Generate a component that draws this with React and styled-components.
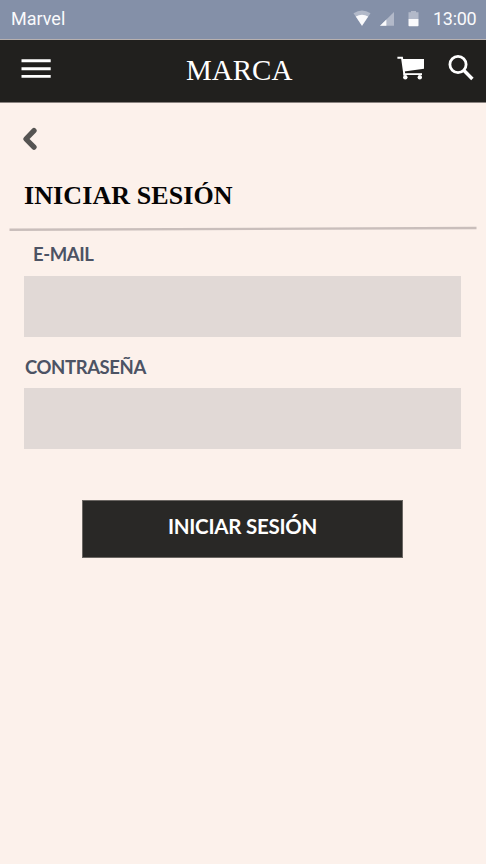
import React from "react";
import styled, { createGlobalStyle } from "styled-components";

const GlobalStyle = createGlobalStyle`
  * { box-sizing: border-box; }
  body { margin: 0; background: #fcf1eb; }
`;

const Screen = styled.div`
  width: 486px;
  height: 864px;
  overflow: hidden;
  display: flex;
  flex-direction: column;
  background: #fcf1eb;
  font-family: Lato, sans-serif;
`;

const StatusBar = styled.div`
  height: 39px;
  flex: none;
  display: flex;
  align-items: center;
  padding: 0 9px 2px 11px;
  background: #8490a8;
  color: #fafafc;
  font: 400 18px/24px Roboto, sans-serif;
`;

const StatusIcons = styled.svg`
  width: 70px;
  height: 20px;
  margin-left: auto;
  margin-right: 10px;
`;

const Clock = styled.span`
  width: 44px;
  letter-spacing: -0.3px;
  white-space: nowrap;
`;

const Header = styled.header`
  height: 64px;
  flex: none;
  display: grid;
  grid-template-columns: 186px 1fr 96px;
  background: #21201e;
  border-top: 1px solid #b7b0af;
  border-bottom: 1px solid #8a8380;
`;

const IconButton = styled.button`
  display: block;
  padding: 0;
  border: 0;
  background: none;
  svg { display: block; }
`;

const MenuButton = styled(IconButton)`
  margin: 19px 0 0 21px;
  width: 30px;
  height: 20px;
`;

const Brand = styled.div`
  padding-top: 13px;
  color: #fff;
  font: 400 29px/34px "Liberation Serif", serif;
  white-space: nowrap;
`;

const Actions = styled.div`
  display: flex;
  align-items: flex-start;
  gap: 20px;
  padding: 14px 0 0 6px;
`;

const Content = styled.main`
  display: flex;
  flex-direction: column;
  align-items: flex-start;
`;

const BackButton = styled(IconButton)`
  margin: 23px 0 0 21px;
  width: 18px;
  height: 26px;
`;

const Title = styled.h1`
  margin: 28px 0 0 24px;
  color: #050404;
  font: 700 26px/32px "Liberation Serif", serif;
  letter-spacing: 0.1px;
  white-space: nowrap;
`;

const Rule = styled.svg`
  display: block;
  width: 486px;
  height: 8px;
  margin-top: 13px;
`;

const Form = styled.form`
  display: flex;
  flex-direction: column;
  width: 437px;
  margin-left: 24px;
`;

const Label = styled.label`
  margin-top: ${(p) => p.$top}px;
  padding-left: ${(p) => p.$indent}px;
  color: #4c5364;
  font-size: 18.5px;
  font-weight: 700;
  line-height: 24px;
  letter-spacing: -0.4px;
  white-space: nowrap;
`;

const Input = styled.input`
  width: 437px;
  height: 61px;
  margin-top: ${(p) => p.$top}px;
  padding: 0 14px;
  border: 0;
  border-radius: 0;
  outline: 0;
  background: #e1d9d6;
  color: #4c5364;
  font: 400 18px Lato, sans-serif;
`;

const Submit = styled.button`
  width: 321px;
  height: 58px;
  margin: 51px 0 0 58px;
  padding: 0 0 6px;
  border: 1px solid #6b6763;
  background: #292826;
  color: #fff;
  font: 700 20.5px/24px Lato, sans-serif;
  letter-spacing: -0.25px;
  white-space: nowrap;
`;

export default function App() {
  return (
    <Screen>
      <GlobalStyle />
      <StatusBar>
        <span>Marvel</span>
        <StatusIcons viewBox="0 0 70 20" aria-hidden="true">
          <path d="M0.5 4.2Q9 -1.2 17.5 4.2L9 17Z" fill="#b2b9c9" />
          <path d="M2.8 7.6Q9 3.7 15.2 7.6L9 16.7Z" fill="#fafafc" />
          <path d="M27 16.7L41 3V16.7Z" fill="#b2b9c9" />
          <path d="M27 16.7L33.4 10.4V16.7Z" fill="#fafafc" />
          <path d="M58 2h5v1.3h2.5V10h-10V3.3H58Z" fill="#b2b9c9" />
          <path d="M55.5 10h10v6.5q0 .8-.8.8h-8.4q-.8 0-.8-.8Z" fill="#fafafc" />
        </StatusIcons>
        <Clock>13:00</Clock>
      </StatusBar>
      <Header>
        <MenuButton aria-label="Menú">
          <svg width="30" height="20" viewBox="0 0 30 20" fill="#fff">
            <path d="M.5 .2h29.2v3H.5ZM.5 8.2h29.2v3H.5ZM.5 16h29.2v2.8H.5Z" />
          </svg>
        </MenuButton>
        <Brand>MARCA</Brand>
        <Actions>
          <IconButton aria-label="Carrito">
            <svg width="31" height="28" viewBox="0 0 31 28">
              <path d="M1.4 3.8H6L8.5 21.5" fill="none" stroke="#fff" strokeWidth="1.9" />
              <path d="M6.2 5H28V14.8L8.2 17.6Z" fill="#fff" />
              <path d="M7.5 19.2H26V21H7.5Z" fill="#fff" />
              <circle cx="9.3" cy="23.2" r="2.2" fill="#fff" />
              <circle cx="23.8" cy="23.2" r="2.2" fill="#fff" />
            </svg>
          </IconButton>
          <IconButton aria-label="Buscar">
            <svg width="28" height="28" viewBox="0 0 28 28" fill="none" stroke="#fff">
              <circle cx="11" cy="10.5" r="8.1" strokeWidth="2.8" />
              <path d="M17 16.5L25.4 25" strokeWidth="3.4" />
            </svg>
          </IconButton>
        </Actions>
      </Header>
      <Content>
        <BackButton aria-label="Volver">
          <svg width="18" height="26" viewBox="0 0 18 26">
            <path d="M13 4.6L4.9 13L13 21.2" fill="none" stroke="#555452" strokeWidth="5.3" strokeLinecap="round" strokeLinejoin="round" />
          </svg>
        </BackButton>
        <Title>INICIAR SESIÓN</Title>
        <Rule viewBox="0 0 486 8" aria-hidden="true">
          <path d="M9.5 4.8L476.5 3" stroke="#c9bebb" strokeWidth="2.4" />
        </Rule>
        <Form onSubmit={(e) => e.preventDefault()}>
          <Label htmlFor="email" $top={9} $indent={9}>E-MAIL</Label>
          <Input id="email" type="email" $top={10} />
          <Label htmlFor="password" $top={18} $indent={1}>CONTRASEÑA</Label>
          <Input id="password" type="password" $top={9} />
          <Submit type="submit">INICIAR SESIÓN</Submit>
        </Form>
      </Content>
    </Screen>
  );
}
